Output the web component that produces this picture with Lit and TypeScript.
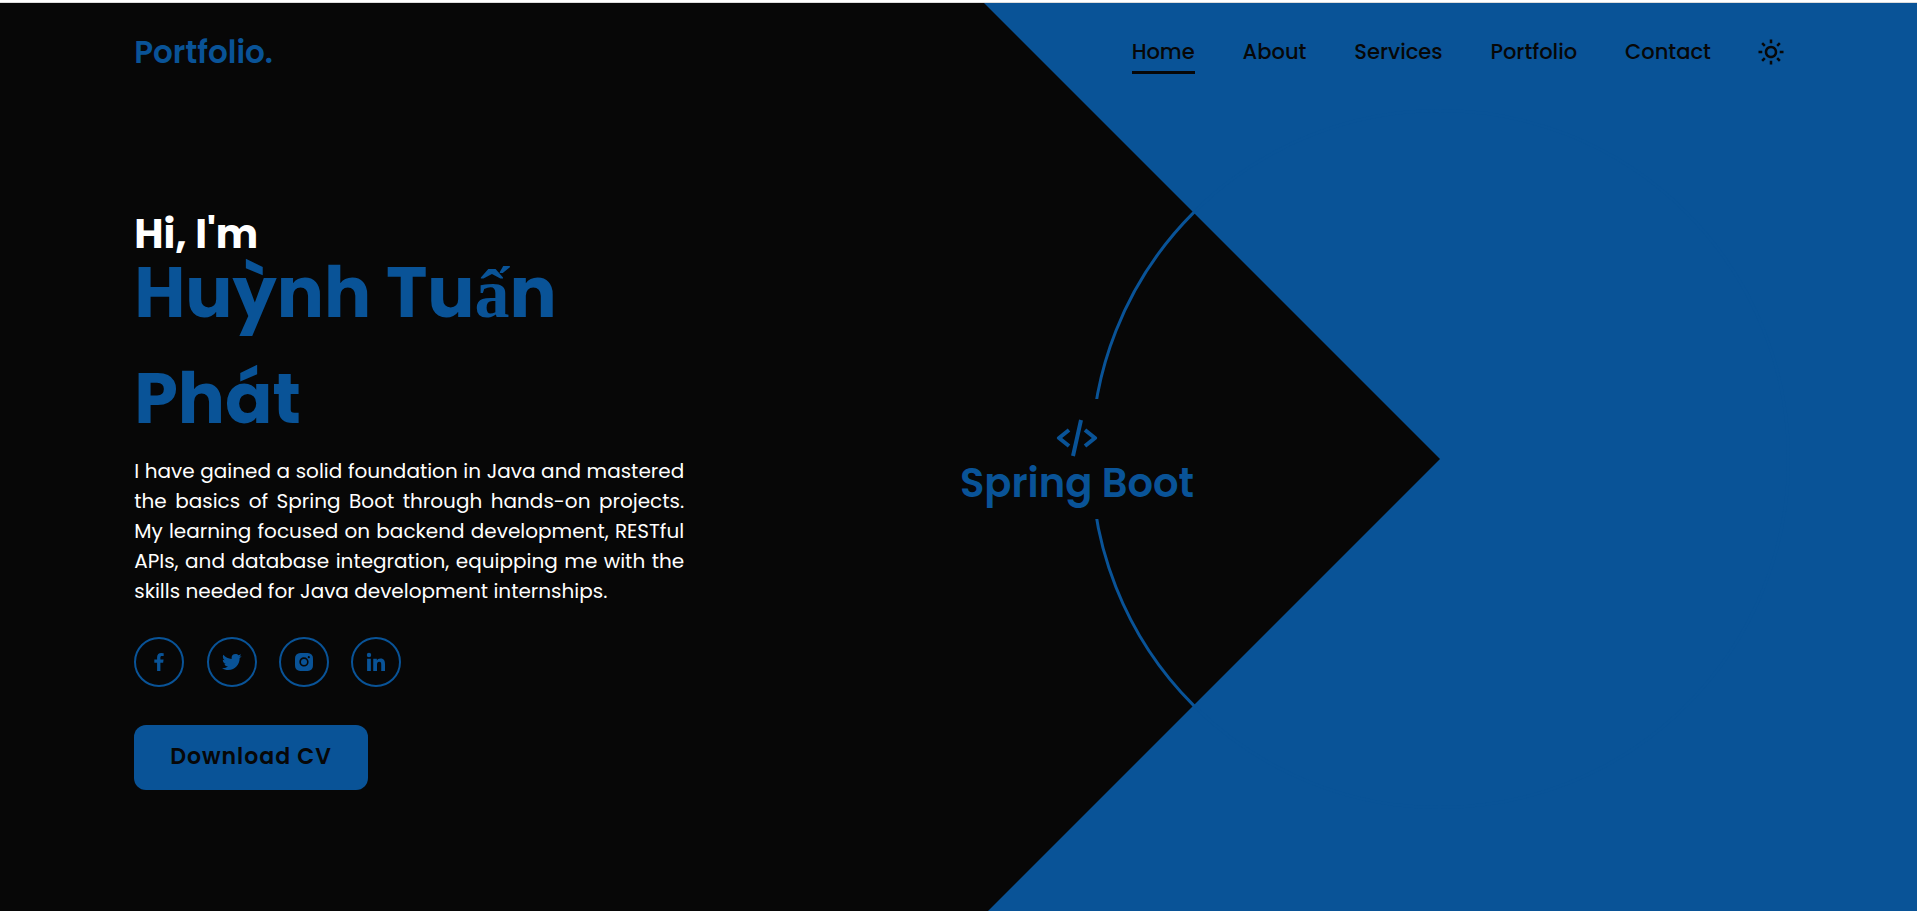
import { LitElement, html, css, svg, type SVGTemplateResult } from "lit";
import { customElement, property, state } from "lit/decorators.js";
import { classMap } from "lit/directives/class-map.js";

const ICONS: Record<string, SVGTemplateResult> = {
  sun: svg`<path d="M6.993 12c0 2.761 2.246 5.007 5.007 5.007s5.007-2.246 5.007-5.007S14.761 6.993 12 6.993 6.993 9.239 6.993 12zM12 8.993c1.658 0 3.007 1.349 3.007 3.007S13.658 15.007 12 15.007 8.993 13.658 8.993 12 10.342 8.993 12 8.993zM10.998 19h2v3h-2zm0-17h2v3h-2zm-9 9h3v2h-3zm17 0h3v2h-3zM4.219 18.363l2.12-2.122 1.415 1.414-2.12 2.122zM16.24 6.344l2.122-2.122 1.414 1.414-2.122 2.122zM6.342 7.759 4.22 5.637l1.415-1.414 2.12 2.122zm13.434 10.605-1.414 1.414-2.122-2.122 1.414-1.414z"/>`,
  code: svg`<path d="m7.375 16.781 1.25-1.562L4.601 12l4.024-3.219-1.25-1.562-5 4a1 1 0 0 0 0 1.562l5 4zm9.25-9.562-1.25 1.562L19.399 12l-4.024 3.219 1.25 1.562 5-4a1 1 0 0 0 0-1.562l-5-4zm-1.649-4.003-4 18-1.953-.434 4-18z"/>`,
  facebook: svg`<path d="M13.397 20.997v-8.196h2.765l.411-3.209h-3.176V7.548c0-.926.258-1.56 1.587-1.56h1.684V3.127A22.336 22.336 0 0 0 14.201 3c-2.444 0-4.122 1.492-4.122 4.231v2.355H7.332v3.209h2.753v8.202h3.312z"/>`,
  twitter: svg`<path d="M19.633 7.997c.013.175.013.349.013.523 0 5.325-4.053 11.461-11.46 11.461-2.282 0-4.402-.661-6.186-1.809.324.037.636.05.973.05a8.07 8.07 0 0 0 5.001-1.721 4.036 4.036 0 0 1-3.767-2.793c.249.037.499.062.761.062.361 0 .724-.05 1.061-.137a4.027 4.027 0 0 1-3.23-3.953v-.05c.537.299 1.16.486 1.82.511a4.022 4.022 0 0 1-1.796-3.354c0-.748.199-1.434.548-2.032a11.457 11.457 0 0 0 8.306 4.215c-.062-.3-.1-.611-.1-.923a4.026 4.026 0 0 1 4.028-4.028c1.16 0 2.207.486 2.943 1.272a7.957 7.957 0 0 0 2.556-.973 4.02 4.02 0 0 1-1.771 2.22 8.073 8.073 0 0 0 2.319-.624 8.645 8.645 0 0 1-2.019 2.083z"/>`,
  instagram: svg`<path d="M20.947 8.305a6.53 6.53 0 0 0-.419-2.216 4.61 4.61 0 0 0-2.633-2.633 6.606 6.606 0 0 0-2.186-.42c-.962-.043-1.267-.055-3.709-.055s-2.755 0-3.71.055a6.606 6.606 0 0 0-2.185.42 4.607 4.607 0 0 0-2.633 2.633 6.554 6.554 0 0 0-.419 2.185c-.043.963-.056 1.268-.056 3.71s0 2.754.056 3.71c.015.748.156 1.486.419 2.187a4.61 4.61 0 0 0 2.634 2.632 6.584 6.584 0 0 0 2.185.45c.963.043 1.268.056 3.71.056s2.755 0 3.71-.056a6.59 6.59 0 0 0 2.186-.419 4.615 4.615 0 0 0 2.633-2.633c.263-.7.404-1.438.419-2.187.043-.962.056-1.267.056-3.71-.002-2.442-.002-2.752-.058-3.709zm-8.953 8.297c-2.554 0-4.623-2.069-4.623-4.623s2.069-4.623 4.623-4.623a4.623 4.623 0 0 1 0 9.246zm4.807-8.339a1.077 1.077 0 0 1-1.078-1.078 1.077 1.077 0 1 1 2.155 0c0 .596-.482 1.078-1.077 1.078z"/><circle cx="11.994" cy="11.979" r="3.003"/>`,
  linkedin: svg`<circle cx="4.983" cy="5.009" r="2.188"/><path d="M9.237 8.855v12.139h3.769v-6.003c0-1.584.298-3.118 2.262-3.118 1.937 0 1.961 1.811 1.961 3.218v5.904H21v-6.657c0-3.27-.704-5.783-4.526-5.783-1.835 0-3.065 1.007-3.568 1.96h-.051v-1.66H9.237zm-6.142 0H6.87v12.139H3.095z"/>`,
};

@customElement("app-icon")
class AppIcon extends LitElement {
  @property() name = "sun";

  static styles = css`
    :host {
      display: inline-flex;
      width: 24px;
      height: 24px;
    }
    .glyph {
      width: 100%;
      height: 100%;
      fill: currentColor;
    }
  `;

  render() {
    return html`<svg class="glyph" viewBox="0 0 24 24" aria-hidden="true">${ICONS[this.name]}</svg>`;
  }
}

@customElement("app-root")
class AppRoot extends LitElement {
  @state() private active = "Home";

  private links = ["Home", "About", "Services", "Portfolio", "Contact"];
  private socials = [
    { icon: "facebook", label: "Facebook" },
    { icon: "twitter", label: "Twitter" },
    { icon: "instagram", label: "Instagram" },
    { icon: "linkedin", label: "LinkedIn" },
  ];

  static styles = css`
    :host {
      --ink: #070707;
      --main: #095397;
      display: block;
      font-family: Poppins, Inter, "Open Sans", sans-serif;
      color: #fff;
    }
    * {
      box-sizing: border-box;
      margin: 0;
    }
    .page {
      display: flex;
      flex-direction: column;
      min-height: 100vh;
      border-top: 2px solid #fff;
    }
    .hero {
      position: relative;
      flex: 1;
      display: flex;
      flex-direction: column;
      border-top: 1px solid #dcdcdc;
      background: var(--ink);
      overflow: hidden;
    }

    /* Backdrop: blue area with a notch, and the ring around its tip */
    .backdrop {
      position: absolute;
      inset: 0;
    }
    .wedge {
      position: absolute;
      inset: 0;
      background: var(--main);
      clip-path: polygon(
        calc(100% - 933px) 0,
        100% 0,
        100% 100%,
        calc(100% - 929px) 100%,
        calc(100% - 477px) 456px
      );
    }
    .ring {
      position: absolute;
      top: 106px;
      right: 127px;
      width: 700px;
      height: 700px;
      border: 3px solid var(--main);
      border-radius: 50%;
    }
    .skill {
      position: absolute;
      top: 396px;
      right: 714px;
      width: 252px;
      height: 120px;
      display: flex;
      flex-direction: column;
      align-items: center;
      justify-content: center;
      background: var(--ink);
      color: var(--main);
    }
    .skill-icon {
      width: 48px;
      height: 48px;
    }
    .skill-name {
      font-size: 40px;
      line-height: 42px;
      font-weight: 600;
      white-space: nowrap;
    }

    .header {
      position: relative;
      display: flex;
      align-items: center;
      justify-content: space-between;
      height: 97px;
      padding: 0 7%;
    }
    .logo {
      color: var(--main);
      font-size: 31px;
      line-height: 48px;
      font-weight: 600;
      text-decoration: none;
    }
    .nav {
      display: flex;
      align-items: center;
      gap: 48px;
    }
    .link {
      position: relative;
      color: var(--ink);
      font-size: 21px;
      line-height: 32px;
      font-weight: 500;
      text-decoration: none;
    }
    .link.active::after {
      content: "";
      position: absolute;
      left: 0;
      bottom: -6px;
      width: 100%;
      height: 3px;
      background: var(--ink);
    }
    .theme {
      display: flex;
      padding: 0;
      margin: 0 -3px;
      border: 0;
      background: none;
      color: var(--ink);
      cursor: pointer;
    }
    .theme-icon {
      width: 30px;
      height: 30px;
    }

    .main {
      position: relative;
      flex: 1;
      display: flex;
      align-items: center;
      padding: 0 7% 8px;
    }
    .intro {
      width: 550px;
      max-width: 100%;
    }
    .hello {
      display: block;
      margin-bottom: -14px;
      font-size: 40px;
      line-height: 40px;
      font-weight: 700;
    }
    .name {
      display: block;
      color: var(--main);
      font-size: 70px;
      line-height: 106px;
      font-weight: 700;
    }
    .accent {
      font-family: "Liberation Serif", serif;
      line-height: 1;
    }
    .about {
      margin-top: 4px;
      font-size: 20px;
      line-height: 30px;
      text-align: justify;
    }
    .socials {
      display: flex;
      justify-content: space-between;
      width: 267px;
      margin: 31px 0 38px;
    }
    .social {
      display: flex;
      align-items: center;
      justify-content: center;
      width: 50px;
      height: 50px;
      border: 2px solid var(--main);
      border-radius: 50%;
      color: var(--main);
    }
    .download {
      height: 65px;
      padding: 0 36px;
      border: 0;
      border-radius: 12px;
      background: var(--main);
      color: var(--ink);
      font: 600 22px/32px Poppins, Inter, "Open Sans", sans-serif;
      letter-spacing: 1px;
      cursor: pointer;
    }
  `;

  render() {
    return html`
      <div class="page">
        <div class="hero">
          <div class="backdrop">
            <div class="wedge"></div>
            <div class="ring"></div>
            <div class="skill">
              <app-icon class="skill-icon" name="code"></app-icon>
              <h3 class="skill-name">Spring Boot</h3>
            </div>
          </div>

          <header class="header">
            <a class="logo" href="#">Portfolio.</a>
            <nav class="nav">
              ${this.links.map(
                (label) => html`<a
                  class=${classMap({ link: true, active: label === this.active })}
                  href="#${label.toLowerCase()}"
                  @click=${() => (this.active = label)}
                  >${label}</a
                >`
              )}
              <button class="theme" type="button" aria-label="Toggle theme">
                <app-icon class="theme-icon" name="sun"></app-icon>
              </button>
            </nav>
          </header>

          <main class="main">
            <div class="intro">
              <h1>
                <span class="hello">Hi, I'm</span>
                <span class="name">Huỳnh Tu<span class="accent">ấ</span>n Phát</span>
              </h1>
              <p class="about">
                I have gained a solid foundation in Java and mastered the basics of Spring Boot
                through hands-on projects. My learning focused on backend development, RESTful
                APIs, and database integration, equipping me with the skills needed for Java
                development internships.
              </p>
              <div class="socials">
                ${this.socials.map(
                  (s) => html`<a class="social" href="#" aria-label=${s.label}
                    ><app-icon name=${s.icon}></app-icon
                  ></a>`
                )}
              </div>
              <button class="download" type="button">Download CV</button>
            </div>
          </main>
        </div>
      </div>
    `;
  }
}
